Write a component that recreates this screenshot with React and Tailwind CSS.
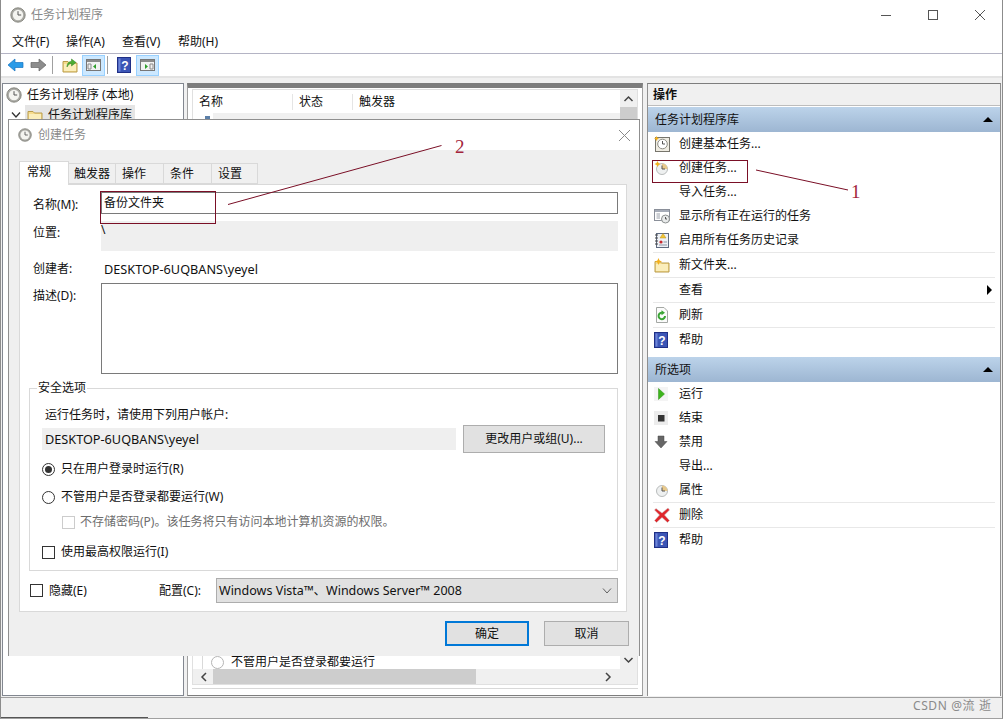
const ClockIcon = ({ size = 16, warm = false }) => (
  <svg width={size} height={size} viewBox="0 0 16 16" className="shrink-0">
    <circle cx="8" cy="8" r="7.2" fill="#a9a9a4" stroke="#77776f" strokeWidth="0.8" />
    <circle cx="8" cy="8" r="5.2" fill="#f4f4f0" />
    {warm && <path d="M8 8V2.8A5.2 5.2 0 0 1 13.2 8Z" fill="#e8c98c" />}
    <path d="M8 4.2V8H11.2" fill="none" stroke="#555" strokeWidth="1" />
  </svg>
);

const HelpBook = ({ size = 16 }) => (
  <svg width={size - 2} height={size} viewBox="0 0 14 16" className="shrink-0">
    <rect x="0.5" y="0.5" width="13" height="15" fill="#3b55b5" stroke="#1f2f86" />
    <rect x="1.5" y="1.5" width="2" height="13" fill="#6f86d8" />
    <text x="8" y="12.5" textAnchor="middle" fontSize="12" fontWeight="700" fill="#fff" fontFamily="Liberation Sans, sans-serif">?</text>
  </svg>
);

const Folder = ({ spark = false, arrow = false }) => (
  <svg width="16" height="15" viewBox="0 0 16 15" className="shrink-0">
    <path d="M1 3.5H6L7.5 5H15V14H1Z" fill="#f6dc8e" stroke="#b99c4d" />
    <rect x="2" y="6" width="12" height="7" fill="#fbeebb" />
    {spark && <path d="M4.5 0 5.6 2.4 8 3.5 5.6 4.6 4.5 7 3.4 4.6 1 3.5 3.4 2.4Z" fill="#f2b01e" />}
    {arrow && <path d="M5 9C5 5 7 3.5 9.5 3.5V1L14 4.5 9.5 8V5.5C8 5.5 6 6.5 5 9Z" fill="#4cae33" stroke="#2f7f1e" strokeWidth="0.5" />}
  </svg>
);

const ACTIONS = [
  { label: '创建基本任务...', icon: 'basic' },
  { label: '创建任务...', icon: 'task' },
  { label: '导入任务...' },
  { label: '显示所有正在运行的任务', icon: 'running' },
  { label: '启用所有任务历史记录', icon: 'history', sep: true },
  { label: '新文件夹...', icon: 'folder', sep: true },
  { label: '查看', arrow: true, sep: true },
  { label: '刷新', icon: 'refresh', sep: true },
  { label: '帮助', icon: 'help' },
];

const SELECTED = [
  { label: '运行', icon: 'run' },
  { label: '结束', icon: 'stop' },
  { label: '禁用', icon: 'disable' },
  { label: '导出...' },
  { label: '属性', icon: 'props', sep: true },
  { label: '删除', icon: 'delete', sep: true },
  { label: '帮助', icon: 'help' },
];

const ActionIcon = ({ name }) => {
  if (name === 'basic') return (
    <svg width="16" height="16" viewBox="0 0 16 16">
      <rect x="1.5" y="1.5" width="14" height="14" fill="#efece2" stroke="#77756c" />
      <circle cx="8.5" cy="8" r="4.8" fill="#fff" stroke="#8c8c84" />
      <path d="M8.5 5V8H11" fill="none" stroke="#555" />
      <path d="M2.5 0 3.4 1.7 5 2.5 3.4 3.3 2.5 5 1.6 3.3 0 2.5 1.6 1.7Z" fill="#f2b01e" />
    </svg>
  );
  if (name === 'task' || name === 'props') return (
    <svg width="16" height="16" viewBox="0 0 16 16">
      <circle cx="8" cy="9" r="5.5" fill="#eef0f0" stroke="#b9bcbc" />
      <path d="M8 9V3.5A5.5 5.5 0 0 1 13.5 9Z" fill="#e8c98c" />
      <path d="M8 5.5V9H11" fill="none" stroke="#555" />
      {name === 'task' && <path d="M3.5 1 4.5 3 6.5 4 4.5 5 3.5 7 2.5 5 .5 4 2.5 3Z" fill="#f2b01e" />}
    </svg>
  );
  if (name === 'running') return (
    <svg width="16" height="16" viewBox="0 0 16 16">
      <rect x="0.5" y="1.5" width="15" height="11" fill="#fff" stroke="#8a8f99" />
      <rect x="1" y="2" width="14" height="2" fill="#a6acb8" />
      <path d="M2.5 6H6M2.5 8H6M2.5 10H6" stroke="#9aa0aa" />
      <circle cx="11.5" cy="11" r="4" fill="#e8eaea" stroke="#8c9090" />
      <path d="M11.5 9V11H13" fill="none" stroke="#555" />
    </svg>
  );
  if (name === 'history') return (
    <svg width="16" height="16" viewBox="0 0 16 16">
      <rect x="2.5" y="1.5" width="12" height="14" fill="#eef1f6" stroke="#5f6b80" />
      <path d="M1 3H4M1 6H4M1 9H4M1 12H4" stroke="#444" />
      <path d="M9 1.5 12 6H6Z" fill="#f2c535" stroke="#b9901b" strokeWidth="0.5" />
      <circle cx="7" cy="10" r="1.6" fill="#c8282d" />
      <path d="M9.5 10H13M5 13H13" stroke="#8b93a3" />
    </svg>
  );
  if (name === 'folder') return <Folder spark />;
  if (name === 'refresh') return (
    <svg width="16" height="16" viewBox="0 0 16 16">
      <path d="M2.5 .5H10L13.5 4V15.5H2.5Z" fill="#fbfbfb" stroke="#a4a8a4" />
      <path d="M11 9A3.2 3.2 0 1 1 8 5.8" fill="none" stroke="#3aa535" strokeWidth="2" />
      <path d="M7.5 3.2 11 5.8 7.5 8.2Z" fill="#3aa535" />
    </svg>
  );
  if (name === 'help') return <HelpBook />;
  if (name === 'run') return (
    <svg width="14" height="14" viewBox="0 0 14 14">
      <rect width="14" height="14" fill="#f4f4f4" />
      <path d="M4.5 1.5 10.5 7 4.5 12.5Z" fill="#3db51c" stroke="#2c8e12" strokeWidth="0.5" />
    </svg>
  );
  if (name === 'stop') return (
    <svg width="14" height="14" viewBox="0 0 14 14">
      <rect width="14" height="14" fill="#ececec" />
      <rect x="4" y="4" width="6.5" height="6.5" fill="#333" />
    </svg>
  );
  if (name === 'disable') return (
    <svg width="14" height="14" viewBox="0 0 14 14">
      <path d="M4 1H10V6.5H13L7 13 1 6.5H4Z" fill="#666" stroke="#4a4a4a" strokeWidth="0.5" />
    </svg>
  );
  if (name === 'delete') return (
    <svg width="16" height="16" viewBox="0 0 16 16">
      <path d="M2 1.5 8 6 14 1 15.5 3 10.5 8 15.5 13.5 13.5 15.5 8 10.5 2.5 15.5 .5 13.5 5.5 8 .5 3Z" fill="#e0262b" stroke="#c9c9c9" strokeWidth="0.5" />
    </svg>
  );
  return null;
};

const ActionRow = ({ item }) => (
  <>
    <div className="flex h-6 items-center">
      <div className="flex w-[31px] shrink-0 pl-[6px]">
        {item.icon && <ActionIcon name={item.icon} />}
      </div>
      <span>{item.label}</span>
      {item.arrow && <span className="ml-auto mr-[8px] h-0 w-0 border-y-[5px] border-l-[5px] border-y-transparent border-l-black" />}
    </div>
    {item.sep && <div className="mx-[5px] h-px bg-[#e8e8e8]" />}
  </>
);

const GroupHeader = ({ title }) => (
  <div className="flex h-[25px] items-center justify-between bg-gradient-to-b from-[#bcd3ea] to-[#9db6d2] pl-[7px] pr-[7px]">
    <span>{title}</span>
    <span className="h-0 w-0 border-x-[5px] border-b-[5px] border-x-transparent border-b-black" />
  </div>
);

const Tab = ({ label, className }) => (
  <div className={`mt-[2px] h-[21px] border border-l-0 border-[#d9d9d9] bg-[#f0f0f0] pt-[2px] ${className}`}>
    {label}
  </div>
);

const Radio = ({ checked }) => (
  <span className="flex h-[13px] w-[13px] shrink-0 items-center justify-center rounded-full border border-[#333] bg-white">
    {checked && <span className="h-[7px] w-[7px] rounded-full bg-[#333]" />}
  </span>
);

const Box = ({ dim }) => (
  <span className={dim ? 'h-[13px] w-[13px] shrink-0 border border-[#ccc] bg-white' : 'h-[13px] w-[13px] shrink-0 border border-[#333] bg-white'} />
);

const Dialog = () => (
  <div className="absolute left-[8px] top-[119px] flex h-[537px] w-[632px] flex-col border border-[#8f8f8f] border-b-0 bg-[#efefef]">
    <div className="flex h-[30px] shrink-0 items-center bg-white pl-[9px] pr-[8px] text-[#8a8a8a]">
      <ClockIcon size={14} />
      <span className="ml-[6px]">创建任务</span>
      <svg width="13" height="13" viewBox="0 0 13 13" className="ml-auto">
        <path d="M1 1 12 12M12 1 1 12" stroke="#8a8a8a" />
      </svg>
    </div>

    <div className="flex flex-1 flex-col pl-[10px] pr-[12px] pt-[11px]">
      <div className="flex h-[23px]">
        <div className="relative z-10 h-[24px] w-[50px] border border-b-0 border-[#d9d9d9] bg-white pl-[7px] pt-[2px]">常规</div>
        <Tab label="触发器" className="w-[47px] pl-[5px]" />
        <Tab label="操作" className="w-[48px] pl-[6px]" />
        <Tab label="条件" className="w-[48px] pl-[6px]" />
        <Tab label="设置" className="w-[46px] pl-[6px]" />
      </div>

      <div className="flex h-[428px] flex-col border border-[#d9d9d9] bg-white pl-[10px] pr-[8px]">
        <div className="mt-[7px] flex h-[22px]">
          <span className="w-[71px] pl-[3px] pt-[5px]">名称(M):</span>
          <div className="flex h-[22px] flex-1 items-center border border-[#7a7a7a] pl-[2px]">备份文件夹</div>
        </div>
        <div className="mt-[7px] flex h-[30px]">
          <span className="w-[71px] pl-[3px] pt-[4px]">位置:</span>
          <div className="flex-1 bg-[#efefef] pt-[1px]">\</div>
        </div>
        <div className="mt-[8px] flex h-[20px] items-center">
          <span className="w-[71px] pl-[3px]">创建者:</span>
          <span className="pl-[3px] text-[12.7px]">DESKTOP-6UQBANS\yeyel</span>
        </div>
        <div className="mt-[4px] flex h-[91px]">
          <span className="w-[71px] pl-[3px] pt-[5px]">描述(D):</span>
          <div className="flex-1 border border-[#7a7a7a]" />
        </div>

        <div className="relative ml-[-1px] mt-[14px] h-[183px] border border-[#d9d9d9] pl-[12px] pr-[12px]">
          <span className="absolute left-[7px] top-[-9px] bg-white px-px">安全选项</span>
          <div className="mt-[18px] h-[18px] pl-[3px]">运行任务时，请使用下列用户帐户:</div>
          <div className="flex h-[28px] items-center">
            <div className="flex h-[22px] w-[414px] items-center bg-[#efefef] pl-[3px] text-[12.7px]">DESKTOP-6UQBANS\yeyel</div>
            <div className="ml-[7px] flex h-[28px] w-[142px] items-center justify-center border border-[#adadad] bg-[#e1e1e1]">更改用户或组(U)...</div>
          </div>
          <div className="mt-[6px] flex h-[20px] items-center gap-[6px]">
            <Radio checked />
            <span>只在用户登录时运行(R)</span>
          </div>
          <div className="mt-[8px] flex h-[20px] items-center gap-[6px]">
            <Radio />
            <span>不管用户是否登录都要运行(W)</span>
          </div>
          <div className="mt-[5px] flex h-[20px] items-center gap-[5px] pl-[20px] text-[#6d6d6d]">
            <Box dim />
            <span>不存储密码(P)。该任务将只有访问本地计算机资源的权限。</span>
          </div>
          <div className="mt-[10px] flex h-[20px] items-center gap-[6px]">
            <Box />
            <span>使用最高权限运行(I)</span>
          </div>
        </div>

        <div className="mt-[7px] flex h-[25px] items-center">
          <Box />
          <span className="ml-[6px] w-[110px]">隐藏(E)</span>
          <span className="w-[57px]">配置(C):</span>
          <div className="flex h-[25px] flex-1 items-center justify-between border border-[#adadad] bg-[#e1e1e1] pl-[2px] pr-[5px]">
            <span className="text-[12.5px]">Windows Vista™、Windows Server™ 2008</span>
            <svg width="10" height="6" viewBox="0 0 10 6"><path d="M1 .5 5 5 9 .5" fill="none" stroke="#606060" /></svg>
          </div>
        </div>
      </div>

      <div className="mr-[-2px] mt-[9px] flex justify-end gap-[15px]">
        <div className="flex h-[25px] w-[84px] items-center justify-center border-2 border-[#0078d7] bg-[#e1e1e1]">确定</div>
        <div className="flex h-[25px] w-[85px] items-center justify-center border border-[#adadad] bg-[#e1e1e1]">取消</div>
      </div>
    </div>
  </div>
);

const Annotations = () => (
  <>
    <svg width="1006" height="721" className="pointer-events-none absolute left-0 top-0">
      <rect x="100.5" y="191.5" width="115" height="32" fill="none" stroke="#7a0f26" />
      <rect x="652.5" y="160.5" width="95" height="22" fill="none" stroke="#7a0f26" />
      <path d="M228 204.5 441.5 145.5M756 170 848 190" fill="none" stroke="#7a0f26" />
    </svg>
    <span className="absolute left-[455px] top-[136px] font-['Liberation_Serif',serif] text-[19px] leading-[22px] text-[#a3243c]">2</span>
    <span className="absolute left-[851px] top-[181px] font-['Liberation_Serif',serif] text-[19px] leading-[22px] text-[#a3243c]">1</span>
    <span className="absolute left-[913px] top-[698px] text-[12px] leading-[16px] tracking-[0.6px] text-[#8a8a8a]">CSDN @流 逝</span>
  </>
);

export default function App() {
  return (
    <div className="relative h-[721px] w-[1006px] overflow-hidden bg-white font-['Noto_Sans','Noto_Sans_CJK_SC',sans-serif] text-[12px] leading-[16px] text-[#111]">
      <div className="flex h-[719px] w-[1003px] flex-col border-x border-b border-x-[#8c8c8c] border-b-[#a0a0a0]">
        {/* title bar */}
        <div className="flex h-[31px] shrink-0 items-center pb-[2px] pl-[9px] text-[#8a8a8a]">
          <ClockIcon size={16} />
          <span className="ml-[5px]">任务计划程序</span>
          <svg width="110" height="12" viewBox="0 0 110 12" className="ml-auto mr-[11px]">
            <path d="M0 6.5H10" stroke="#555" />
            <rect x="47.5" y="1.5" width="9" height="9" fill="none" stroke="#555" />
            <path d="M94 1 104 11M104 1 94 11" stroke="#555" />
          </svg>
        </div>

        {/* menu */}
        <div className="flex h-[23px] shrink-0 items-center border-b border-[#b4b4c4] pb-[1px]">
          <span className="ml-[11px] w-[54px]">文件(F)</span>
          <span className="w-[56px]">操作(A)</span>
          <span className="w-[56px]">查看(V)</span>
          <span>帮助(H)</span>
        </div>

        {/* toolbar */}
        <div className="flex h-[24px] shrink-0 items-center border-b-2 border-[#e3e3e3] pl-[6px]">
          <svg width="17" height="14" viewBox="0 0 17 14"><path d="M8 1 1 7 8 13V9.5H16V4.5H8Z" fill="#2a9be8" stroke="#1673c0" strokeWidth="0.7" /></svg>
          <svg width="17" height="14" viewBox="0 0 17 14" className="ml-[6px]"><path d="M9 1 16 7 9 13V9.5H1V4.5H9Z" fill="#8d8d8d" stroke="#666" strokeWidth="0.7" /></svg>
          <span className="ml-[5px] h-[18px] w-px bg-[#a0a0a0]" />
          <span className="ml-[9px]"><Folder arrow /></span>
          <span className="ml-[4px] flex h-[21px] w-[23px] items-center justify-center border border-[#99d1ff] bg-[#cce8ff]">
            <svg width="15" height="12" viewBox="0 0 15 12"><rect x=".5" y=".5" width="14" height="11" fill="#f2f2f2" stroke="#777" /><rect x="1" y="1" width="13" height="2" fill="#8a8a8a" /><path d="M10 5 7 7.5 10 10Z" fill="#2e9e2a" /><path d="M2 5H5V10H2Z" fill="none" stroke="#8a8a8a" /></svg>
          </span>
          <span className="ml-[2px] h-[18px] w-px bg-[#a0a0a0]" />
          <span className="ml-[9px]"><HelpBook /></span>
          <span className="ml-[5px] flex h-[21px] w-[23px] items-center justify-center border border-[#99d1ff] bg-[#cce8ff]">
            <svg width="15" height="12" viewBox="0 0 15 12"><rect x=".5" y=".5" width="14" height="11" fill="#f2f2f2" stroke="#777" /><rect x="1" y="1" width="13" height="2" fill="#8a8a8a" /><path d="M5 5 8 7.5 5 10Z" fill="#2e9e2a" /><path d="M10 5H13V10H10Z" fill="none" stroke="#8a8a8a" /></svg>
          </span>
        </div>

        {/* panes */}
        <div className="flex h-[619px] shrink-0 items-stretch bg-[#f0f0f0] pb-[1px] pt-[5px]">
          <div className="ml-[1px] w-[182px] shrink-0 border border-[#828790] bg-white">
            <div className="flex h-[21px] items-center pl-[3px] pt-[1px]">
              <ClockIcon size={16} />
              <span className="ml-[5px]">任务计划程序 (本地)</span>
            </div>
            <div className="flex h-[20px] items-center pl-[8px]">
              <svg width="10" height="6" viewBox="0 0 10 6"><path d="M1 .5 5 5 9 .5" fill="none" stroke="#333" strokeWidth="1.3" /></svg>
              <span className="ml-[4px] flex h-[20px] w-[110px] items-center bg-[#e5e5e5] pl-[2px]">
                <Folder />
                <span className="ml-[5px]">任务计划程序库</span>
              </span>
            </div>
          </div>

          <div className="ml-[3px] flex w-[456px] shrink-0 flex-col border-t-[5px] border-x border-b border-[#7d7d7d] border-x-[#a0a0a0] bg-white p-[1px] pl-[4px] pr-[4px]">
            <div className="flex min-h-0 flex-1 flex-col border border-[#e0e0e0]">
              <div className="flex min-h-0 flex-1">
                <div className="flex min-w-0 flex-1 flex-col">
                  <div className="flex h-[23px] shrink-0 items-center pt-[1px]">
                    <span className="w-[100px] border-r border-[#e5e5e5] pl-[6px]">名称</span>
                    <span className="w-[60px] border-r border-[#e5e5e5] pl-[6px]">状态</span>
                    <span className="pl-[6px]">触发器</span>
                  </div>
                  <div className="flex h-[8px] shrink-0 items-end pl-[12px]">
                    <span className="h-[5px] w-[5px] bg-[#5b7fa8]" />
                    <span className="ml-[3px] h-[8px] flex-1 self-start bg-[#f0f0f0]" />
                  </div>
                  <div className="flex-1" />
                  <div className="flex h-[14px] shrink-0 items-center pl-[9px]">
                    <span className="flex h-[14px] items-center border-l border-[#d9d9d9] pl-[8px]">
                      <span className="h-[13px] w-[13px] rounded-full border border-[#b5b5b5]" />
                      <span className="ml-[7px]">不管用户是否登录都要运行</span>
                    </span>
                  </div>
                </div>
                <div className="flex w-[17px] shrink-0 flex-col bg-[#f0f0f0] py-[5px]">
                  <svg width="17" height="8" viewBox="0 0 17 8"><path d="M4.5 6 8.5 2 12.5 6" fill="none" stroke="#444" strokeWidth="1.5" /></svg>
                  <span className="mt-[4px] h-[30px] bg-[#cdcdcd]" />
                  <svg width="17" height="8" viewBox="0 0 17 8" className="mt-auto"><path d="M4.5 2 8.5 6 12.5 2" fill="none" stroke="#444" strokeWidth="1.5" /></svg>
                </div>
              </div>
              <div className="flex h-[15px] shrink-0 items-center bg-[#f0f0f0] pl-[3px]">
                <svg width="17" height="10" viewBox="0 0 17 10" className="shrink-0"><path d="M10 1 6 5 10 9" fill="none" stroke="#444" strokeWidth="1.5" /></svg>
                <span className="h-[15px] w-[263px] bg-[#cdcdcd]" />
                <svg width="17" height="10" viewBox="0 0 17 10" className="ml-auto mr-[21px] shrink-0"><path d="M7 1 11 5 7 9" fill="none" stroke="#444" strokeWidth="1.5" /></svg>
              </div>
            </div>
            <div className="mt-[3px] h-[6px] shrink-0 border-t border-[#d8d8d8]" />
          </div>

          <div className="ml-[4px] w-[354px] shrink-0 border-t border-x border-[#7d7d7d] border-x-[#8f8f8f] bg-white">
            <div className="flex h-[22px] items-center border-b border-[#bdbdbd] bg-[#f0f0f0] pl-[5px] font-semibold">操作</div>
            <div className="h-px" />
            <GroupHeader title="任务计划程序库" />
            {ACTIONS.map((item) => <ActionRow key={item.label} item={item} />)}
            <div className="h-[5px]" />
            <GroupHeader title="所选项" />
            {SELECTED.map((item) => <ActionRow key={item.label} item={item} />)}
          </div>
        </div>

        {/* status bar */}
        <div className="flex flex-1 items-end border-t border-[#a0a0a0] bg-[#f0f0f0]">
          <span className="h-px w-[147px] bg-[#555]" />
        </div>
      </div>

      <Dialog />
      <Annotations />
    </div>
  );
}
